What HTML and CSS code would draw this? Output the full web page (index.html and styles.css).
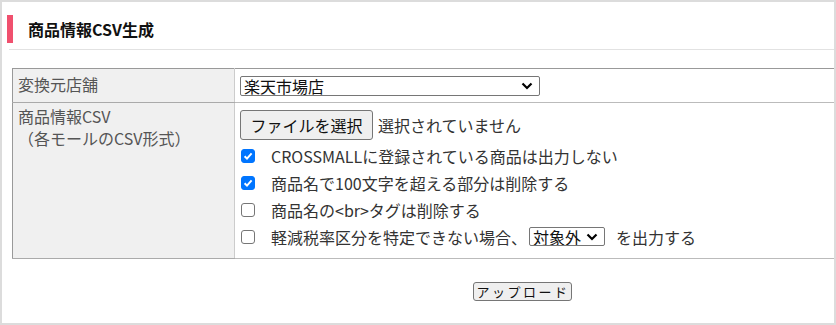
FILE: index.html
```html
<!DOCTYPE html>
<html lang="ja">
<head>
<meta charset="utf-8">
<title>商品情報CSV生成</title>
<link rel="stylesheet" href="styles.css">
</head>
<body>
<div class="page">
  <h1 class="title">商品情報CSV生成</h1>
  <div class="rule"></div>
  <div class="form">
    <table class="grid">
      <tr class="row-shop">
        <th>変換元店舗</th>
        <td>
          <select class="sel sel-shop">
            <option>楽天市場店</option>
          </select>
        </td>
      </tr>
      <tr class="row-csv">
        <th>商品情報CSV<br>（各モールのCSV形式）</th>
        <td>
          <div class="file-line">
            <button type="button" class="file-btn">ファイルを選択</button>
            <span class="file-none">選択されていません</span>
          </div>
          <label class="opt"><input type="checkbox" checked><span class="opt-text">CROSSMALLに登録されている商品は出力しない</span></label>
          <label class="opt"><input type="checkbox" checked><span class="opt-text">商品名で100文字を超える部分は削除する</span></label>
          <label class="opt"><input type="checkbox"><span class="opt-text">商品名の&lt;br&gt;タグは削除する</span></label>
          <label class="opt"><input type="checkbox"><span class="opt-text">軽減税率区分を特定できない場合、</span><select class="sel sel-tax"><option>対象外</option></select><span class="opt-after">を出力する</span></label>
        </td>
      </tr>
    </table>
    <div class="actions">
      <button type="button" class="upload">アップロード</button>
    </div>
  </div>
</div>
</body>
</html>
```

FILE: styles.css
```css
html, body {
  margin: 0;
  padding: 0;
  background: #fff;
}
body {
  font-family: "Noto Sans CJK JP", "Noto Sans", sans-serif;
  color: #333;
}
.page {
  box-sizing: border-box;
  width: 836px;
  height: 325px;
  border: 2px solid #dcdcdc;
  overflow: hidden;
  background: #fff;
}
.title {
  margin: 13px 0 0 5px;
  height: 28px;
  border-left: 6px solid #f0506e;
  padding-left: 15px;
  display: flex;
  align-items: center;
  font-size: 16px;
  font-weight: bold;
  line-height: 20px;
  color: #111;
}
.rule {
  margin: 6px 0 0 7px;
  height: 1px;
  background: #e2e2e2;
}
.form {
  margin: 18px 0 0 10px;
  width: 1020px;
}
.grid {
  width: 1020px;
  border-collapse: collapse;
  border: 1px solid #999;
  font-size: 16px;
  line-height: 22px;
}
.grid th {
  width: 216px;
  background: #f0f0f0;
  color: #555;
  font-weight: normal;
  text-align: left;
  padding: 0 0 0 5px;
  border-bottom: 1px solid #aaa;
}
.grid td {
  border-left: 1px solid #ccc;
  border-bottom: 1px solid #bbb;
  padding: 0 0 0 5px;
  color: #333;
}
.row-shop th {
  height: 30px;
  padding-bottom: 3px;
  vertical-align: middle;
}
.row-shop td {
  height: 33px;
  vertical-align: middle;
}
.row-csv th {
  vertical-align: top;
  padding-top: 2px;
}
.row-csv td {
  vertical-align: top;
  padding-top: 6px;
  padding-bottom: 8px;
}
.sel {
  -webkit-appearance: none;
  appearance: none;
  box-sizing: border-box;
  font-family: inherit;
  font-size: 16px;
  line-height: 18px;
  color: #111;
  border: 1px solid #767676;
  border-radius: 2px;
  padding: 0 0 0 3px;
  background-color: #fff;
  background-image: url("data:image/svg+xml;utf8,<svg xmlns='http://www.w3.org/2000/svg' width='12' height='8' viewBox='0 0 12 8'><path d='M1.5 1.5 L6 6 L10.5 1.5' fill='none' stroke='black' stroke-width='2.2'/></svg>");
  background-repeat: no-repeat;
  background-position: right 6px center;
  background-size: 12px 8px;
}
.sel-shop {
  display: block;
  width: 300px;
  height: 20px;
}
.file-line {
  display: flex;
  align-items: center;
  height: 31px;
}
.file-btn {
  box-sizing: border-box;
  width: 133px;
  height: 30px;
  font-family: inherit;
  font-size: 16px;
  color: #111;
  background: #efefef;
  border: 1px solid #767676;
  border-radius: 3px;
  padding: 0;
}
.file-none {
  margin-left: 5px;
  color: #333;
}
.opt {
  display: flex;
  align-items: center;
  height: 27px;
}
.file-line + .opt {
  margin-top: 2px;
}
.opt input {
  -webkit-appearance: none;
  appearance: none;
  box-sizing: border-box;
  flex: none;
  width: 14px;
  height: 14px;
  margin: 0 0 0 1px;
  border: 1px solid #767676;
  border-radius: 3px;
  background: #fff;
}
.opt input:checked {
  border-color: #0075ff;
  background-color: #0075ff;
  background-image: url("data:image/svg+xml;utf8,<svg xmlns='http://www.w3.org/2000/svg' width='12' height='12' viewBox='0 0 12 12'><path d='M2.6 6.2 L5 8.6 L9.6 3.4' fill='none' stroke='white' stroke-width='2'/></svg>");
  background-repeat: no-repeat;
  background-position: center;
}
.opt-text {
  margin-left: 16px;
}
.sel-tax {
  width: 76px;
  height: 19px;
  margin: 0 11px 0 2px;
}
.actions {
  margin-top: 23px;
  display: flex;
  justify-content: center;
}
.upload {
  box-sizing: border-box;
  width: 99px;
  height: 19px;
  padding: 0 0 0 2px;
  font-family: inherit;
  font-size: 13px;
  line-height: 17px;
  letter-spacing: 2.5px;
  color: #111;
  background: #efefef;
  border: 1px solid #767676;
  border-radius: 3px;
}
```
